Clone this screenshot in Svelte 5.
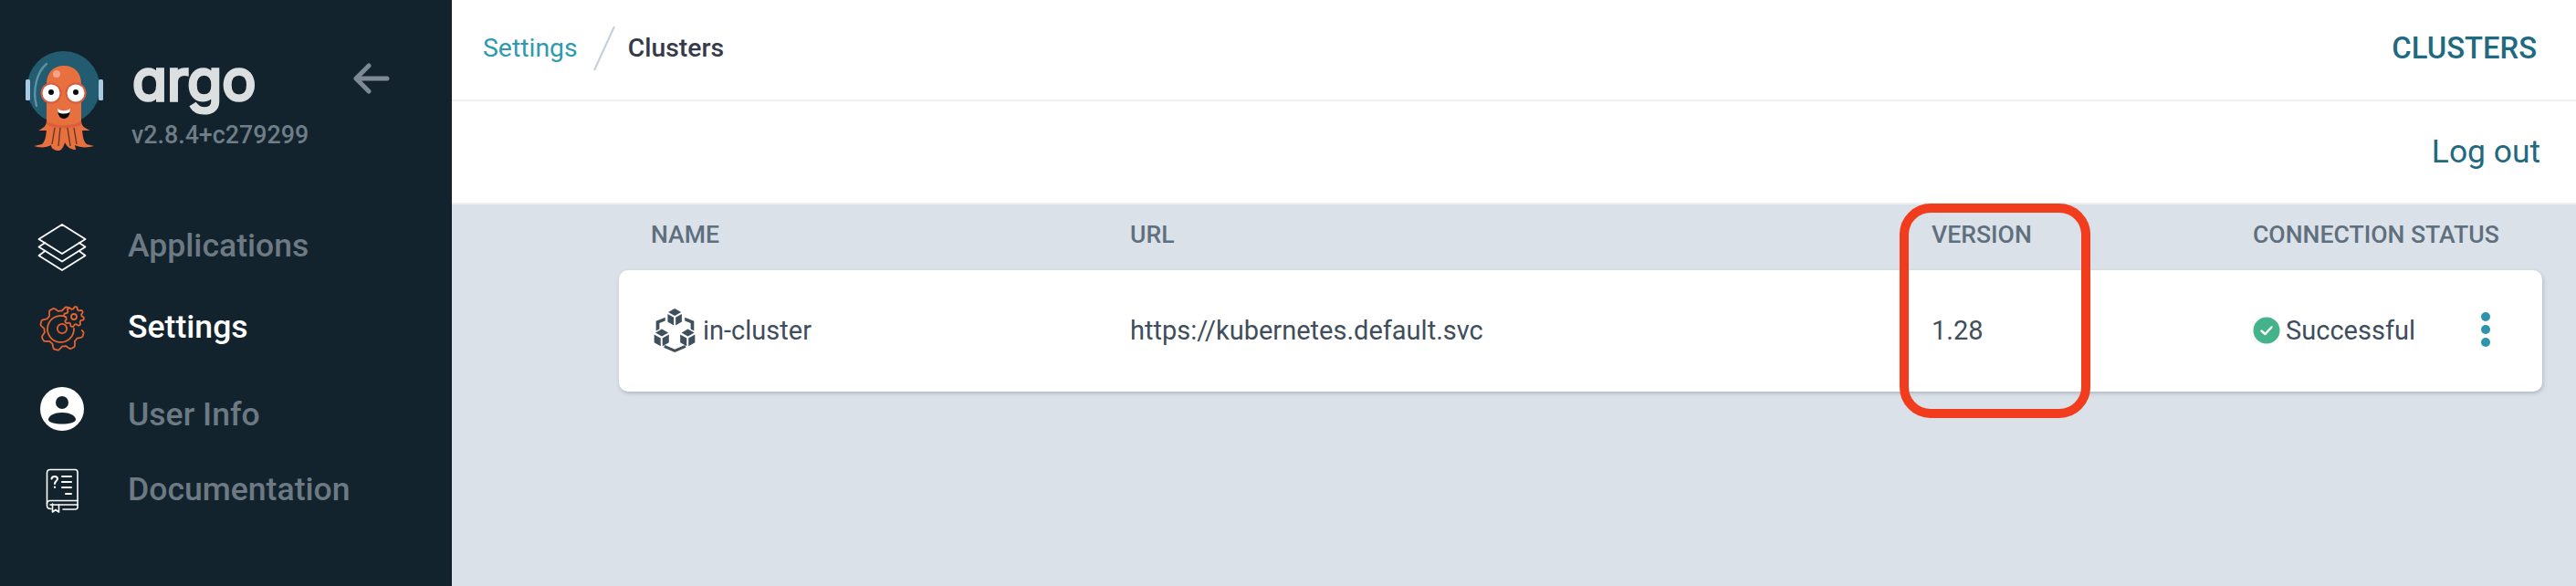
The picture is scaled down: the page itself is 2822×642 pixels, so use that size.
<script>
  function gear(cx, cy, r1, r2, teeth, from, to) {
    const step = 360 / teeth;
    const n = Math.round((to - from) / step * 4);
    const pt = (a, r) => {
      const t = (a * Math.PI) / 180;
      return (cx + r * Math.cos(t)).toFixed(2) + ' ' + (cy + r * Math.sin(t)).toFixed(2);
    };
    let d = '';
    const samples = n * 6;
    for (let i = 0; i <= samples; i++) {
      const a = from + ((to - from) * i) / samples;
      const phase = (((a - from) / step) % 1) * Math.PI * 2;
      const w = Math.max(-1, Math.min(1, Math.sin(phase) * 1.5));
      const r = (r1 + r2) / 2 + ((r2 - r1) / 2) * w;
      d += (i === 0 ? 'M' : 'L') + pt(a, r);
    }
    return d + (to - from >= 360 ? 'Z' : '');
  }
  const bigGear = gear(32, 34, 19.5, 24, 8, 5, 290);
  const smallGear = gear(45, 21, 8.5, 11, 8, 0, 360);

  const nav = [
    { label: 'Applications', cls: 'apps', icon: 'layers' },
    { label: 'Settings', cls: 'settings', icon: 'gear', active: true },
    { label: 'User Info', cls: 'user', icon: 'user' },
    { label: 'Documentation', cls: 'docs', icon: 'book' }
  ];
</script>

<div class="page">
  <aside class="sidebar">
    <div class="brand">
      <svg class="logo" viewBox="0 0 130 140" width="130" height="140" aria-hidden="true">
        <circle cx="59.5" cy="56" r="40" fill="#235c70" />
        <rect x="18" y="47" width="5" height="23" rx="1.5" fill="#a9c9e2" />
        <rect x="98" y="47" width="5" height="23" rx="1.5" fill="#a9c9e2" />
        <path d="M41 30C31 38 25 58 30 76" fill="none" stroke="#5c93a3" stroke-width="2.4" stroke-linecap="round" />
        <path d="M41 52C41 40 48 32 60 32C72 32 79 40 79 52V92C79 98 82 100 89 103H80C81 110 81 114 85 118L93 120C86 122 78 122 72 119L73 124C68 124 64 122 61 116C60 120 58 124 55 125C50 125 46 123 46 119C41 122 33 122 27 120L36 118C40 114 40 110 41 103H32C38 100 41 98 41 92Z" fill="#e8703f" />
        <path d="M41 92C48 99 72 99 79 92V96C72 102 48 102 41 96Z" fill="#d9603a" />
        <path d="M50 100L47 118M56 100L54 120M64 100L67 120M71 100L74 118" stroke="#3b2620" stroke-width="1.4" opacity=".75" />
        <circle cx="52" cy="41" r="4" fill="#f3a48c" />
        <circle cx="46" cy="62" r="11.5" fill="#d85c3d" />
        <circle cx="73" cy="62" r="11.5" fill="#d85c3d" />
        <circle cx="46" cy="62" r="9.5" fill="#fff" />
        <circle cx="73" cy="62" r="9.5" fill="#fff" />
        <circle cx="46" cy="61" r="3" fill="#0b0b0b" />
        <circle cx="73" cy="61" r="3" fill="#0b0b0b" />
        <path d="M53 80C57 83 63 83 67 80C67 86 64 90 60 90C56 90 53 86 53 80Z" fill="#0b0b0b" />
        <path d="M53 79C57 82 63 82 67 79L66.5 83C62 85 58 85 53.5 83Z" fill="#fff" />
      </svg>
      <div class="wordmark">
        <div class="argo">argo</div>
        <div class="version">v2.8.4+c279299</div>
      </div>
      <svg class="back" viewBox="0 0 40 34" width="40" height="34" aria-hidden="true">
        <path d="M37 17H4M17 3L3 17L17 31" fill="none" stroke="#7d8a94" stroke-width="5" stroke-linecap="round" stroke-linejoin="round" />
      </svg>
    </div>

    <nav class="nav">
      {#each nav as item}
        <div class="nav-item {item.cls}" class:active={item.active}>
          <svg class="nav-icon" viewBox="0 0 64 64" width="64" height="64" aria-hidden="true">
            {#if item.icon === 'layers'}
              <g fill="none" stroke="#fff" stroke-width="1.8" stroke-linejoin="round">
                <path d="M14 37.500L6.500 43L32 59L57.500 43L50 37.500" />
                <path d="M14 28.500L6.500 33.500L32 49.500L57.500 33.500L50 28.500" />
                <path d="M32 9L57.500 25L32 41L6.500 25Z" />
              </g>
            {:else if item.icon === 'gear'}
              <g fill="none" stroke="#e8622f" stroke-width="1.8" stroke-linejoin="round" stroke-linecap="round">
                <path d={bigGear} />
                <path d="M36 21A14.500 14.500 0 1 0 45 34" />
                <circle cx="32" cy="34" r="5.200" />
                <path d={smallGear} />
                <circle cx="45" cy="21" r="3" />
              </g>
            {:else if item.icon === 'user'}
              <circle cx="32" cy="26" r="24" fill="#fff" />
              <circle cx="32" cy="19" r="7" fill="#13232d" />
              <path d="M32 30C43 30 47 35 47 37.500C47 41 40 42.500 32 42.500C24 42.500 17 41 17 37.500C17 35 21 30 32 30Z" fill="#13232d" />
            {:else}
              <g fill="none" stroke="#fff" stroke-width="1.600" stroke-linecap="round" stroke-linejoin="round" transform="translate(0 2)">
                <path d="M20 51.500C16.500 51.500 15.500 50.500 15.500 48V12C15.500 9.500 16.500 8.500 19 8.500H46.500C48.500 8.500 49 9.500 49 11.500V50C49 51.500 48 52 46 52H33" />
                <path d="M15.500 45.500C15.500 43 17 42.500 19 42.500H49M19 47H49" />
                <path d="M21.500 46V55L25 52.500L28.500 55V47" />
                <path d="M20.500 18.500C21 15 27 15 27 18.500C27 21 24 21 24 24M24 27.500V28" stroke-width="2" />
                <path d="M32 16H42M32 22H42M32 28H42M36 35H42" stroke-width="2" />
              </g>
            {/if}
          </svg>
          <span>{item.label}</span>
        </div>
      {/each}
    </nav>
  </aside>

  <main class="main">
    <header class="topbar">
      <div class="crumbs">
        <span class="crumb-link">Settings</span>
        <svg class="slash" viewBox="0 0 24 50" width="24" height="50" aria-hidden="true">
          <path d="M23 1L1 49" stroke="#c5ced9" stroke-width="2" />
        </svg>
        <span class="crumb-current">Clusters</span>
      </div>
      <div class="page-title">CLUSTERS</div>
    </header>
    <div class="toolbar"><span class="logout">Log out</span></div>

    <section class="content">
      <div class="grid head">
        <div>NAME</div>
        <div>URL</div>
        <div>VERSION</div>
        <div>CONNECTION STATUS</div>
      </div>
      <div class="grid card">
        <div class="name">
          <svg class="cluster-icon" viewBox="168 357 140 143" width="47" height="48" aria-hidden="true">
            <g fill="#3f4f5c">
              <path d="M237 357L258 369L237 381L216 369Z" />
              <path d="M214 375L234 386V412L214 400Z" />
              <path d="M240 386L260 375V400L240 412Z" />
              <path d="M195 424L216 436L195 448L174 436Z" />
              <path d="M170 442L191 454V480L170 468Z" />
              <path d="M197 454L218 442V468L197 480Z" />
              <path d="M280 424L301 436L280 448L259 436Z" />
              <path d="M255 442L276 454V480L255 468Z" />
              <path d="M282 454L303 442V468L282 480Z" />
              <path d="M205 476L237 490L270 476L274 484L237 500L201 484Z" />
              <path d="M176 398L206 386V397L187 405V424L176 430Z" />
              <path d="M300 398L270 386V397L289 405V424L300 430Z" />
            </g>
          </svg>
          <span>in-cluster</span>
        </div>
        <div>https://kubernetes.default.svc</div>
        <div>1.28</div>
        <div class="status">
          <svg viewBox="0 0 30 30" width="30" height="30" aria-hidden="true">
            <circle cx="15" cy="15" r="14.500" fill="#44b38b" />
            <path d="M9.500 15.500L13.500 19L20.500 11.500" fill="none" stroke="#fff" stroke-width="2.400" stroke-linecap="round" stroke-linejoin="round" />
          </svg>
          <span>Successful</span>
          <div class="dots"><i></i><i></i><i></i></div>
        </div>
      </div>
      <div class="highlight"></div>
    </section>
  </main>
</div>

<style>
  :global(body) {
    margin: 0;
    background: #dae1e8;
    font-family: Roboto, "Liberation Sans", sans-serif;
  }
  .page {
    display: flex;
    width: 2822px;
    height: 642px;
    overflow: hidden;
  }
  .sidebar {
    width: 495px;
    flex: none;
    background: #13232d;
    box-sizing: border-box;
  }
  .brand {
    display: flex;
    align-items: flex-start;
    height: 225px;
    padding: 40px 68px 0 10px;
    box-sizing: border-box;
  }
  .logo { flex: none; }
  .wordmark {
    margin-left: 4px;
    flex: 1;
  }
  .argo {
    font-family: Inter, sans-serif;
    font-feature-settings: "cv11" 1;
    font-size: 62px;
    line-height: 60px;
    padding-top: 18px;
    height: 70px;
    font-weight: 400;
    color: #dcdfdf;
    -webkit-text-stroke: 3.5px #dcdfdf;
    margin-left: 1px;
  }
  .version {
    font-size: 26.8px;
    line-height: 40px;
    font-weight: 500;
    color: #6f7d87;
  }
  .back {
    flex: none;
    margin-top: 29px;
  }
  .nav {
    display: flex;
    flex-direction: column;
  }
  .nav-item {
    display: flex;
    align-items: center;
    height: 70px;
    padding-left: 36px;
    gap: 40px;
    font-size: 35.6px;
    font-weight: 500;
    color: #6d7a84;
  }
  .nav-item.active { color: #fff; }
  .nav-icon { flex: none; }
  .apps { margin-top: 9px; }
  .settings { margin-top: 19px; }
  .user { margin-top: 26px; }
  .docs { margin-top: 12px; }
  .main {
    flex: 1;
    display: flex;
    flex-direction: column;
    min-width: 0;
  }
  .topbar {
    height: 111px;
    flex: none;
    box-sizing: border-box;
    background: #fff;
    border-bottom: 2px solid #eff2f5;
    display: flex;
    align-items: center;
    justify-content: space-between;
    padding: 0 43px 4px 34px;
  }
  .crumbs {
    display: flex;
    align-items: center;
    font-size: 28.4px;
  }
  .crumb-link { color: #2e9ab0; }
  .slash { margin: 0 14px 0 17px; }
  .crumb-current { color: #343a4a; font-weight: 500; }
  .page-title {
    font-size: 32.8px;
    font-weight: 500;
    color: #1f6a80;
  }
  .toolbar {
    height: 111px;
    flex: none;
    background: #fff;
    display: flex;
    align-items: center;
    justify-content: flex-end;
    padding: 0 39px 2px 0;
    box-sizing: border-box;
  }
  .logout {
    font-size: 35.4px;
    color: #1f6a80;
  }
  .content {
    flex: 1;
    position: relative;
    background: #dae1e8;
    border-top: 2px solid #eef1f4;
    padding: 0 37px 0 183px;
    box-sizing: border-box;
  }
  .grid {
    display: grid;
    grid-template-columns: 525px 878px 352px 1fr;
    padding-left: 35px;
  }
  .head {
    height: 72px;
    align-items: center;
    font-size: 26.6px;
    font-weight: 500;
    color: #5f6f7d;
    padding-bottom: 7px;
    box-sizing: border-box;
  }
  .card {
    height: 133px;
    align-items: center;
    background: #fff;
    border-radius: 10px;
    box-shadow: 1px 2px 4px rgba(60, 80, 100, 0.28);
    font-size: 29px;
    color: #404e5c;
    padding-bottom: 2px;
    box-sizing: border-box;
  }
  .name {
    display: flex;
    align-items: center;
    gap: 7px;
    margin-left: 3px;
  }
  .status {
    display: flex;
    align-items: center;
    gap: 6px;
  }
  .dots {
    display: flex;
    flex-direction: column;
    gap: 4px;
    margin-left: 66px;
    margin-top: -2px;
  }
  .dots i {
    display: block;
    width: 10px;
    height: 10px;
    border-radius: 50%;
    background: #2e93ad;
  }
  .highlight {
    position: absolute;
    left: 1586px;
    top: -1px;
    width: 209px;
    height: 235px;
    box-sizing: border-box;
    border: 10px solid #f23c1e;
    border-radius: 34px;
  }
</style>
